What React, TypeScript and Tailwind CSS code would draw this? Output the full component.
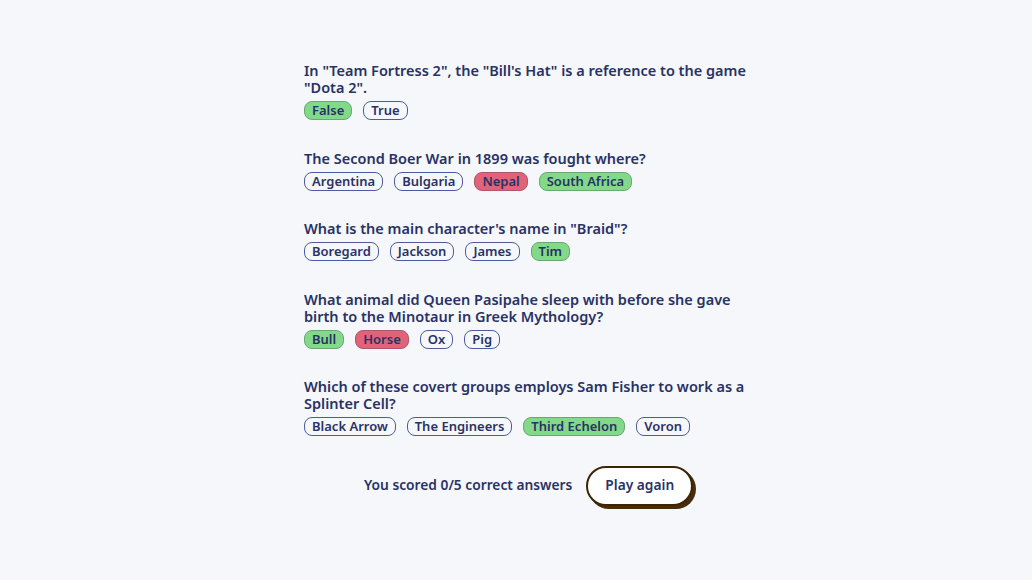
import React from 'react';

type Question = {
  text: string;
  options: { label: string; state?: 'right' | 'wrong' }[];
};

const questions: Question[] = [
  {
    text: 'In "Team Fortress 2", the "Bill\'s Hat" is a reference to the game "Dota 2".',
    options: [{ label: 'False', state: 'right' }, { label: 'True' }]
  },
  {
    text: 'The Second Boer War in 1899 was fought where?',
    options: [
      { label: 'Argentina' },
      { label: 'Bulgaria' },
      { label: 'Nepal', state: 'wrong' },
      { label: 'South Africa', state: 'right' }
    ]
  },
  {
    text: 'What is the main character\'s name in "Braid"?',
    options: [{ label: 'Boregard' }, { label: 'Jackson' }, { label: 'James' }, { label: 'Tim', state: 'right' }]
  },
  {
    text: 'What animal did Queen Pasipahe sleep with before she gave birth to the Minotaur in Greek Mythology?',
    options: [{ label: 'Bull', state: 'right' }, { label: 'Horse', state: 'wrong' }, { label: 'Ox' }, { label: 'Pig' }]
  },
  {
    text: 'Which of these covert groups employs Sam Fisher to work as a Splinter Cell?',
    options: [
      { label: 'Black Arrow' },
      { label: 'The Engineers' },
      { label: 'Third Echelon', state: 'right' },
      { label: 'Voron' }
    ]
  }
];

export default function App() {
  return (
    <div
      className="min-h-[580px] bg-[#f5f7fb] text-[#293264] pt-[62px]"
      style={{ fontFamily: '"Noto Sans", "Liberation Sans", sans-serif' }}
    >
      <div className="ml-[304px] w-[462px]">
        {questions.map((q, i) => (
          <div key={i} className="mb-[29.5px]">
            <h2 className="text-[14.5px] leading-[17px] font-semibold">{q.text}</h2>
            <div className="mt-[5px] flex gap-[11px]">
              {q.options.map((o) => (
                <span
                  key={o.label}
                  className={
                    'h-[19px] px-[7px] rounded-[8px] border text-[13px] leading-[17px] font-semibold ' +
                    (o.state === 'right'
                      ? 'bg-[#82d98a] border-[#6aa872]'
                      : o.state === 'wrong'
                      ? 'bg-[#e0637a] border-[#b0566a]'
                      : 'bg-transparent border-[#4d5b9e]')
                  }
                >
                  {o.label}
                </span>
              ))}
            </div>
          </div>
        ))}
        <div className="flex items-center gap-[14px] pl-[60px]">
          <p className="text-[13.75px] font-semibold">You scored 0/5 correct answers</p>
          <button className="h-[40px] w-[107px] rounded-full border-2 border-[#3b2506] bg-white text-[13.75px] font-semibold shadow-[3px_3px_0_#4a2c0a]">
            Play again
          </button>
        </div>
      </div>
    </div>
  );
}
